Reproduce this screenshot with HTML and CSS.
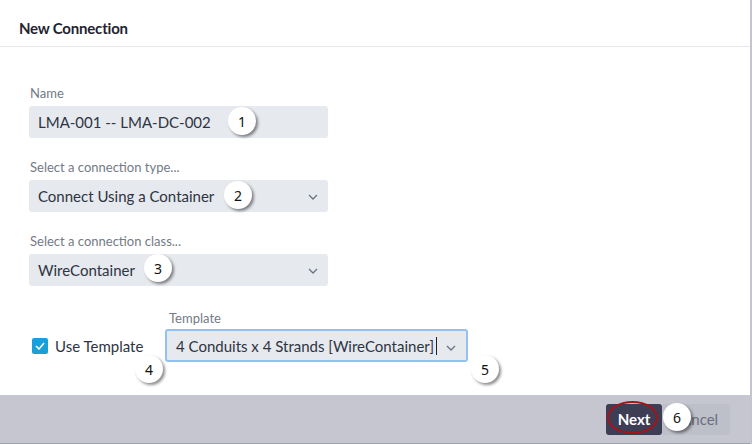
FILE: index.html
```html
<!DOCTYPE html>
<html>
<head>
<meta charset="utf-8">
<link rel="stylesheet" href="styles.css">
</head>
<body>
<div class="dialog">
  <div class="header">New Connection</div>
  <div class="content">
    <div class="field">
      <div class="label">Name</div>
      <div class="input">LMA-001 -- LMA-DC-002</div>
      <span class="badge b1">1</span>
    </div>
    <div class="field">
      <div class="label">Select a connection type...</div>
      <div class="input select">Connect Using a Container
        <svg class="chev" width="10" height="6" viewBox="0 0 10 6"><path d="M1 1l4 4 4-4" fill="none" stroke="#6b7280" stroke-width="1.3"/></svg>
      </div>
      <span class="badge b2">2</span>
    </div>
    <div class="field">
      <div class="label">Select a connection class...</div>
      <div class="input select">WireContainer
        <svg class="chev" width="10" height="6" viewBox="0 0 10 6"><path d="M1 1l4 4 4-4" fill="none" stroke="#6b7280" stroke-width="1.3"/></svg>
      </div>
      <span class="badge b3">3</span>
    </div>
    <div class="template-row">
      <label class="check">
        <span class="box"><svg width="10" height="8" viewBox="0 0 10 8"><path d="M1 4l3 3 5-6" fill="none" stroke="#fff" stroke-width="1.5"/></svg></span>
        Use Template
        <span class="badge b4">4</span>
      </label>
      <div class="tfield">
        <div class="label">Template</div>
        <div class="input select focused">4 Conduits x 4 Strands [WireContainer]<span class="caret"></span>
          <svg class="chev" width="10" height="6" viewBox="0 0 10 6"><path d="M1 1l4 4 4-4" fill="none" stroke="#6b7280" stroke-width="1.3"/></svg>
        </div>
        <span class="badge b5">5</span>
      </div>
    </div>
  </div>
  <div class="footer">
    <div class="btn next">Next<span class="ring"></span></div>
    <div class="btn cancel">Cancel</div>
    <span class="badge b6">6</span>
  </div>
</div>
</body>
</html>
```
FILE: styles.css
```css
* { box-sizing: border-box; }
html, body { margin: 0; padding: 0; }
body {
  width: 752px;
  height: 444px;
  font-family: Lato, "Noto Sans", sans-serif;
  background: #fff;
  overflow: hidden;
}
.dialog {
  width: 752px;
  height: 444px;
  display: flex;
  flex-direction: column;
  border-right: 2px solid #c3c5cd;
}
.header {
  height: 47px;
  padding: 18px 0 0 19px;
  line-height: 20px;
  font-size: 15px;
  font-weight: 700;
  color: #1f2430;
  border-bottom: 1px solid #e5e7eb;
  letter-spacing: -0.2px;
}
.content {
  flex: 1;
  padding: 36px 0 0 29px;
  display: flex;
  flex-direction: column;
  gap: 19px;
}
.field {
  position: relative;
  width: 299px;
}
.label {
  font-size: 13px;
  line-height: 20px;
  color: #737a86;
  padding-left: 1px;
  margin-bottom: 3px;
}
.input {
  height: 32px;
  background: #e6e9ee;
  border-radius: 3px;
  padding-left: 9px;
  font-size: 15px;
  color: #2e3442;
  display: flex;
  align-items: center;
  position: relative;
}
.chev {
  position: absolute;
  right: 10px;
  top: 14px;
}
.badge {
  position: absolute;
  z-index: 2;
  width: 28px;
  height: 28px;
  border-radius: 50%;
  background: #fff;
  box-shadow: 2px 2px 3px rgba(0,0,0,0.45);
  font-size: 14px;
  color: #111;
  display: flex;
  align-items: center;
  justify-content: center;
  font-family: "Noto Sans", sans-serif;
}
.b1 { left: 199px; top: 24px; }
.b2 { left: 195px; top: 24px; }
.b3 { left: 115px; top: 23px; }
.template-row {
  display: flex;
  align-items: flex-end;
  margin-top: 3px;
}
.check {
  position: relative;
  display: flex;
  align-items: center;
  gap: 7px;
  font-size: 15px;
  color: #2e3442;
  height: 33px;
  padding-left: 3px;
  width: 136px;
}
.box {
  width: 16px;
  height: 16px;
  border-radius: 2px;
  background: #1a9fd9;
  display: flex;
  align-items: center;
  justify-content: center;
}
.b4 { left: 106px; top: 26px; }
.tfield {
  position: relative;
  width: 303px;
}
.tfield .label { padding-left: 4px; margin-bottom: 1px; }
.focused {
  height: 33px;
  border: 2px solid #93c1f2;
  padding-left: 9px;
}
.caret {
  display: inline-block;
  width: 1px;
  height: 18px;
  background: #222;
  margin-left: 2px;
}
.b5 { left: 306px; top: 47px; }
.footer {
  height: 49px;
  background: #c5c6cf;
  border-bottom: 1px solid #9ea3ae;
  display: flex;
  justify-content: flex-end;
  align-items: center;
  padding-right: 20px;
  position: relative;
}
.btn {
  height: 31px;
  border-radius: 3px;
  display: flex;
  align-items: center;
  justify-content: center;
  font-size: 15px;
}
.next {
  position: relative;
  width: 56px;
  background: #3d3d55;
  color: #fff;
  font-weight: 700;
}
.ring {
  position: absolute;
  left: 1px;
  top: -3px;
  width: 51px;
  height: 33px;
  border: 2px solid #a3141b;
  border-radius: 50%;
}
.cancel {
  width: 68px;
  background: #bdbfc9;
  color: #6b7080;
}
.b6 { left: 663px; top: 8px; }
```
